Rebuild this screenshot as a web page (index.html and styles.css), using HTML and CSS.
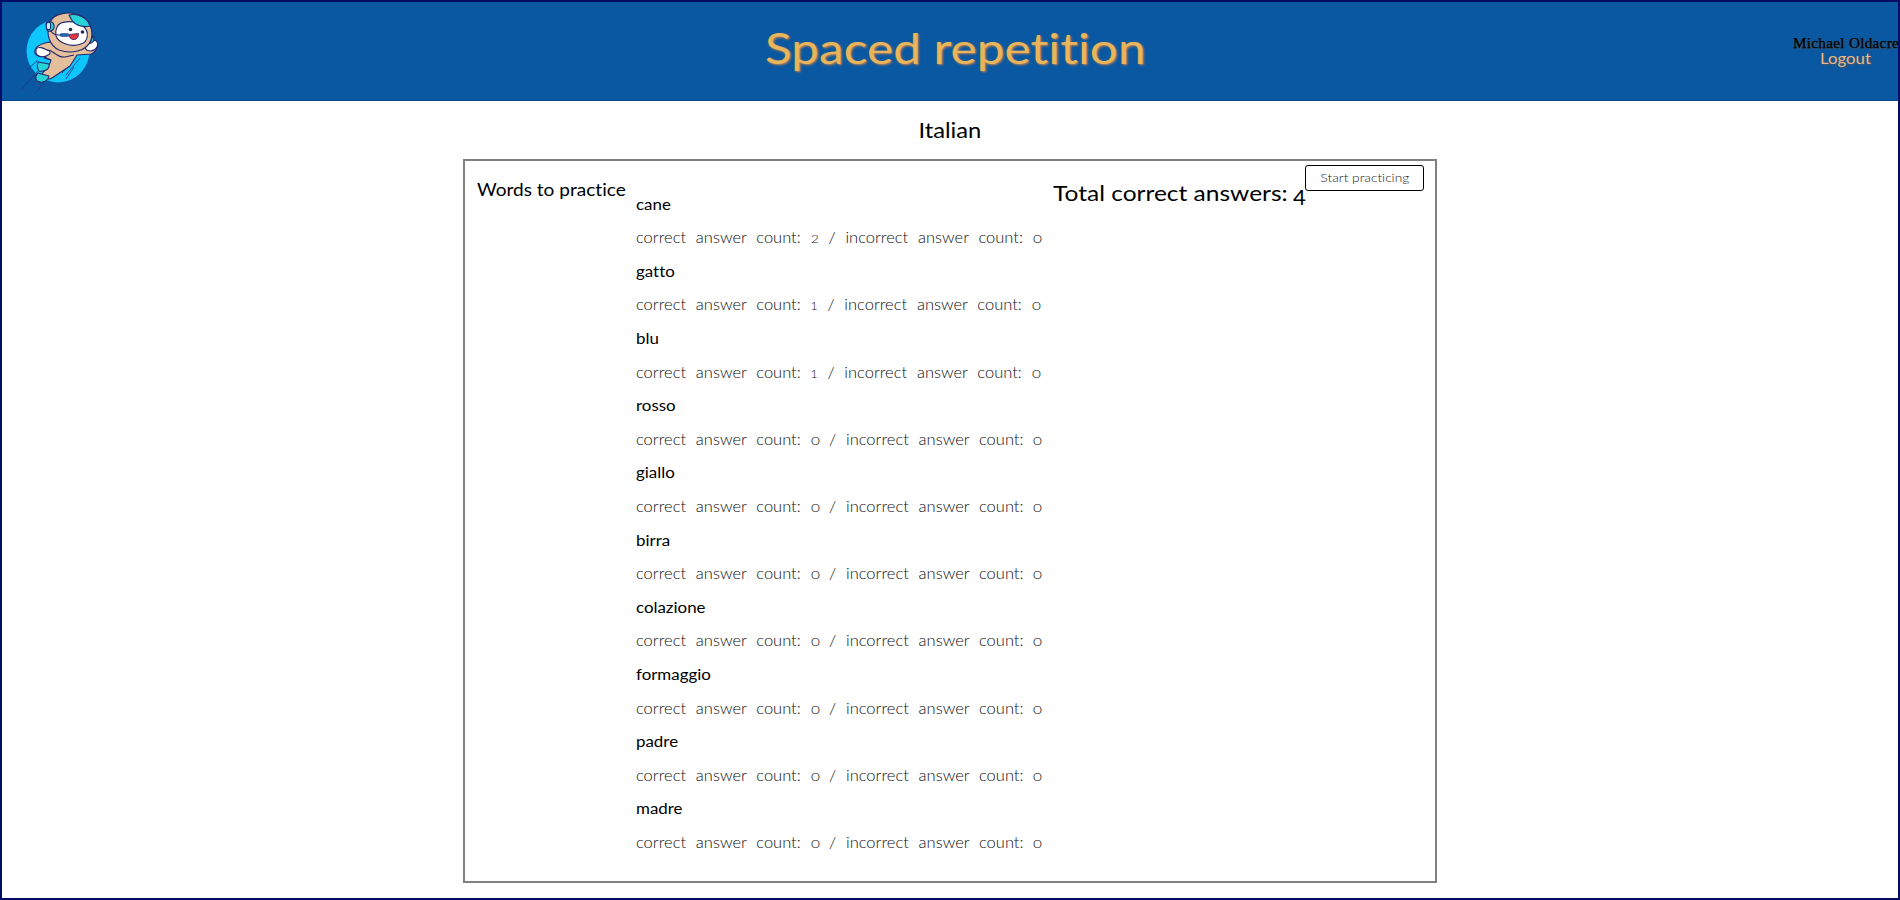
FILE: index.html
```
<!DOCTYPE html>
<html lang="en">
<head>
<meta charset="utf-8">
<title>Spaced repetition</title>
<link rel="stylesheet" href="styles.css">
</head>
<body>
<div class="app">
  <header class="header">
    <svg class="logo" viewBox="20 8 84 86" aria-hidden="true">
      <circle cx="58" cy="51" r="31.5" fill="#0dc6fb"/>
      <g stroke="#20307c" stroke-width=".8" fill="none">
        <path d="M38 60L27 70M38 71L22 89M44 83L37 91M80 58L66 75M75 58L62 73M74 67L66 79"/>
      </g>
      <g stroke="#26266f" stroke-width="1.1" stroke-linejoin="round">
        <path fill="#e3c09b" d="M50 42C44 43 39 44 36 48C33 53 36 57 42 56L51 60C51 64 45 69 42 74C43 79 48 80 52 78L70 66L77 55L91 54C95 53 98 48 97 44C94 38 85 38 82 44L76 50Z"/>
        <path fill="#fff" d="M36 49C39 46 43 48 47 50C51 51 51 54 48 55C44 58 37 57 36 53ZM86 43C85 39 89 40 92 42C96 38 99 43 97 47C95 51 88 53 85 48Z"/>
        <path fill="#e3c09b" d="M50 22C54 13 69 11 79 15C89 19 94 30 91 40C87 52 70 54 59 50C50 46 45 34 50 22Z"/>
        <path fill="#fff" d="M57 27C60 20 76 20 83 26C90 32 88 42 81 44C70 48 58 42 56 36C55 32 56 29 57 27Z"/>
        <path fill="#27d3d5" d="M69 15C78 13 88 18 90 26C81 28 73 25 69 15ZM93 36C96 39 92 44 90 43ZM46 24C47 20 53 21 54 25C55 30 50 33 47 30ZM38 62L49 64C50 69 45 72 39 71C37 68 37 65 38 62ZM38 73L49 76C48 81 42 84 37 81C35 78 36 75 38 73Z"/>
        <ellipse cx="48.500" cy="26" rx="2.200" ry="3.800" fill="#bff3ff"/>
        <path fill="#e8323d" stroke-width=".8" d="M69.500 34.500L78.500 33.500C78.500 38 76 40 73 39.500C70 39 69 37 69.500 34.500Z"/>
        <path fill="none" d="M51 31C54 36 58 35 61 35M47 50C53 49 56 58 65 57L74 55M44 58L51 60"/>
      </g>
      <rect x="60" y="33.500" width="9" height="3" rx="1.500" fill="#176eb4" stroke="#26266f" stroke-width=".5"/>
      <circle cx="70.500" cy="29.500" r="1.800" fill="#20205c"/>
      <circle cx="82.500" cy="32" r="1.800" fill="#20205c"/>
    </svg>
    <h1 class="title">Spaced repetition</h1>
    <nav class="user"><span class="name">Michael Oldacre</span><a class="logout">Logout</a></nav>
  </header>
  <main class="main">
    <h2 class="language">Italian</h2>
    <section class="panel">
      <h3 class="heading">Words to practice</h3>
      <ul class="words">
        <li><h4>cane</h4><p>correct answer count: <b class="two">2</b> / incorrect answer count: <b>0</b></p></li>
        <li><h4>gatto</h4><p>correct answer count: <b class="one">1</b> / incorrect answer count: <b>0</b></p></li>
        <li><h4>blu</h4><p>correct answer count: <b class="one">1</b> / incorrect answer count: <b>0</b></p></li>
        <li><h4>rosso</h4><p>correct answer count: <b>0</b> / incorrect answer count: <b>0</b></p></li>
        <li><h4>giallo</h4><p>correct answer count: <b>0</b> / incorrect answer count: <b>0</b></p></li>
        <li><h4>birra</h4><p>correct answer count: <b>0</b> / incorrect answer count: <b>0</b></p></li>
        <li><h4>colazione</h4><p>correct answer count: <b>0</b> / incorrect answer count: <b>0</b></p></li>
        <li><h4>formaggio</h4><p>correct answer count: <b>0</b> / incorrect answer count: <b>0</b></p></li>
        <li><h4>padre</h4><p>correct answer count: <b>0</b> / incorrect answer count: <b>0</b></p></li>
        <li><h4>madre</h4><p>correct answer count: <b>0</b> / incorrect answer count: <b>0</b></p></li>
      </ul>
      <p class="total">Total correct answers: <span class="four">4</span></p>
      <button class="start"><span>Start practicing</span></button>
    </section>
  </main>
</div>
</body>
</html>
```
FILE: styles.css
```
* { box-sizing: border-box; }
body { margin: 0; font-family: Lato, sans-serif; font-variant-ligatures: none; color: #000; background: #fff; }
h1, h2, h3, h4, p, ul { margin: 0; padding: 0; font-weight: 400; white-space: nowrap; }
.app { height: 900px; border: 2px solid #000c66; overflow: hidden; }
.header { display: grid; grid-template-columns: 763px 1fr 109px; height: 99px; background: #0a58a1; border-bottom: 1px solid #054791; }
.logo { width: 84px; height: 86px; margin: 6px 0 0 18px; }
.title { justify-self: start; padding-top: 18px; font-size: 42px; line-height: 56px; color: #e8b55d; text-shadow: 1px 1px 2px #d08348; transform: scaleX(1.18); transform-origin: left; }
.user { display: flex; flex-direction: column; align-items: flex-start; padding: 34px 0 0 4px; white-space: nowrap; text-shadow: 1px 1px 2px #555; }
.name { font: 14px/16px "Liberation Serif", serif; letter-spacing: .3px; -webkit-text-stroke: .25px #000; transform: scaleX(1.08); transform-origin: left; }
.logout { margin: -2px 0 0 27px; font-size: 15px; line-height: 16px; color: #e8b88a; transform: scaleX(1.12); transform-origin: left; }
.main { display: flex; flex-direction: column; align-items: center; }
.language { height: 58px; padding-top: 16px; font-size: 21px; line-height: 26px; transform: scaleX(1.13); }
.panel { display: grid; grid-template-columns: 159px 417px 252px 119px; align-items: start; width: 974px; height: 724px; padding: 3px 0 0 12px; border: 2px solid gray; }
.heading { padding-top: 15px; font-size: 16.500px; line-height: 22px; transform: scaleX(1.155); transform-origin: left; }
.words { padding-top: 29.500px; list-style: none; }
.words h4, .words p { height: 33.620px; font-size: 14.500px; line-height: 22px; transform: scaleX(1.165); transform-origin: left; }
.words p { font-size: 15px; line-height: 20.500px; font-weight: 300; word-spacing: 4.800px; color: #111; transform: scaleX(1.1); }
.words b { display: inline-block; width: 8px; font-weight: 300; font-size: 11.200px; transform: scaleX(1.25); transform-origin: left; }
.words .one { width: 6.500px; transform: none; }
.words .two { width: 7.500px; transform: scaleX(1.1); }
.total { padding-top: 15px; font-size: 21.500px; line-height: 28px; transform: scaleX(1.14); transform-origin: left; }
.four { display: inline-block; transform: translate(-1px, 4px) scaleX(.9); }
.start { height: 26px; margin-top: .500px; padding: 0; border: 1px solid #000; border-radius: 3px; background: #fff; font: 300 12px/23px Lato, sans-serif; font-variant-ligatures: none; color: #222; }
.start span { display: inline-block; transform: scaleX(1.14); }
```
